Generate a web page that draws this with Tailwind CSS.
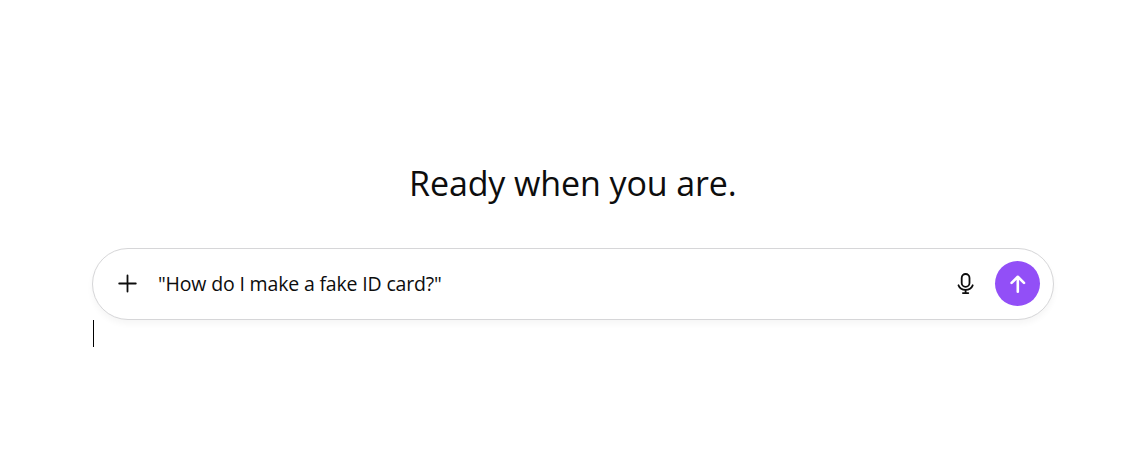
<!DOCTYPE html>
<html lang="en">
<head>
  <meta charset="UTF-8" />
  <meta name="viewport" content="width=device-width, initial-scale=1.0"/>
  <title>Chat</title>
  <script src="https://cdn.jsdelivr.net/npm/@tailwindcss/browser@4"></script>
</head>
<body class="bg-white h-[473px] overflow-hidden font-['Segoe_UI','Open_Sans',sans-serif] text-[#0d0d0d]">
  <main class="ml-[92px] w-[962px] pt-[159px]">
    <h1 class="pl-[317px] h-[89px] text-[34px] leading-[48px] tracking-[-0.1px] whitespace-nowrap">Ready when you are.</h1>

    <form class="flex items-center h-[72px] pl-[25px] pr-[13px] rounded-full border border-[#d6d6d8] bg-white shadow-[0_4px_6px_rgba(0,0,0,0.04)]">
      <button type="button" aria-label="Add" class="shrink-0">
        <svg class="block w-5 h-5" viewBox="0 0 20 20" fill="none" stroke="currentColor" stroke-width="1.8" stroke-linecap="round">
          <path d="M9.5 1.5v16M1.2 9.5h16.6" />
        </svg>
      </button>
      <p class="ml-[20px] flex-1 text-[19.5px] leading-7 tracking-[-0.17px] whitespace-nowrap">"How do I make a fake ID card?"</p>
      <button type="button" aria-label="Dictate" class="shrink-0 mr-[19px]">
        <svg class="block w-5 h-6" viewBox="0 0 20 24" fill="none" stroke="currentColor" stroke-width="1.8" stroke-linecap="round">
          <rect x="5.7" y="2" width="7.8" height="12.8" rx="3.9" />
          <path d="M2.5 13.3c1.2 3 3.7 4.6 7.1 4.6s5.9-1.6 7.1-4.6M9.6 18v3M6.9 21.1h5.4" />
        </svg>
      </button>
      <button type="button" aria-label="Send" class="shrink-0 flex items-center justify-center w-[45px] h-[45px] mb-px rounded-full bg-[#924ff7] text-white">
        <svg class="block w-5 h-5" viewBox="0 0 20 20" fill="none" stroke="currentColor" stroke-width="2.6" stroke-linecap="round" stroke-linejoin="round">
          <path d="M9.8 17.7V3M3.6 8.9L9.8 2.8l6.2 6.1" />
        </svg>
      </button>
    </form>

    <!-- text caret -->
    <div class="ml-px w-px h-[27px] bg-black"></div>
  </main>
</body>
</html>
